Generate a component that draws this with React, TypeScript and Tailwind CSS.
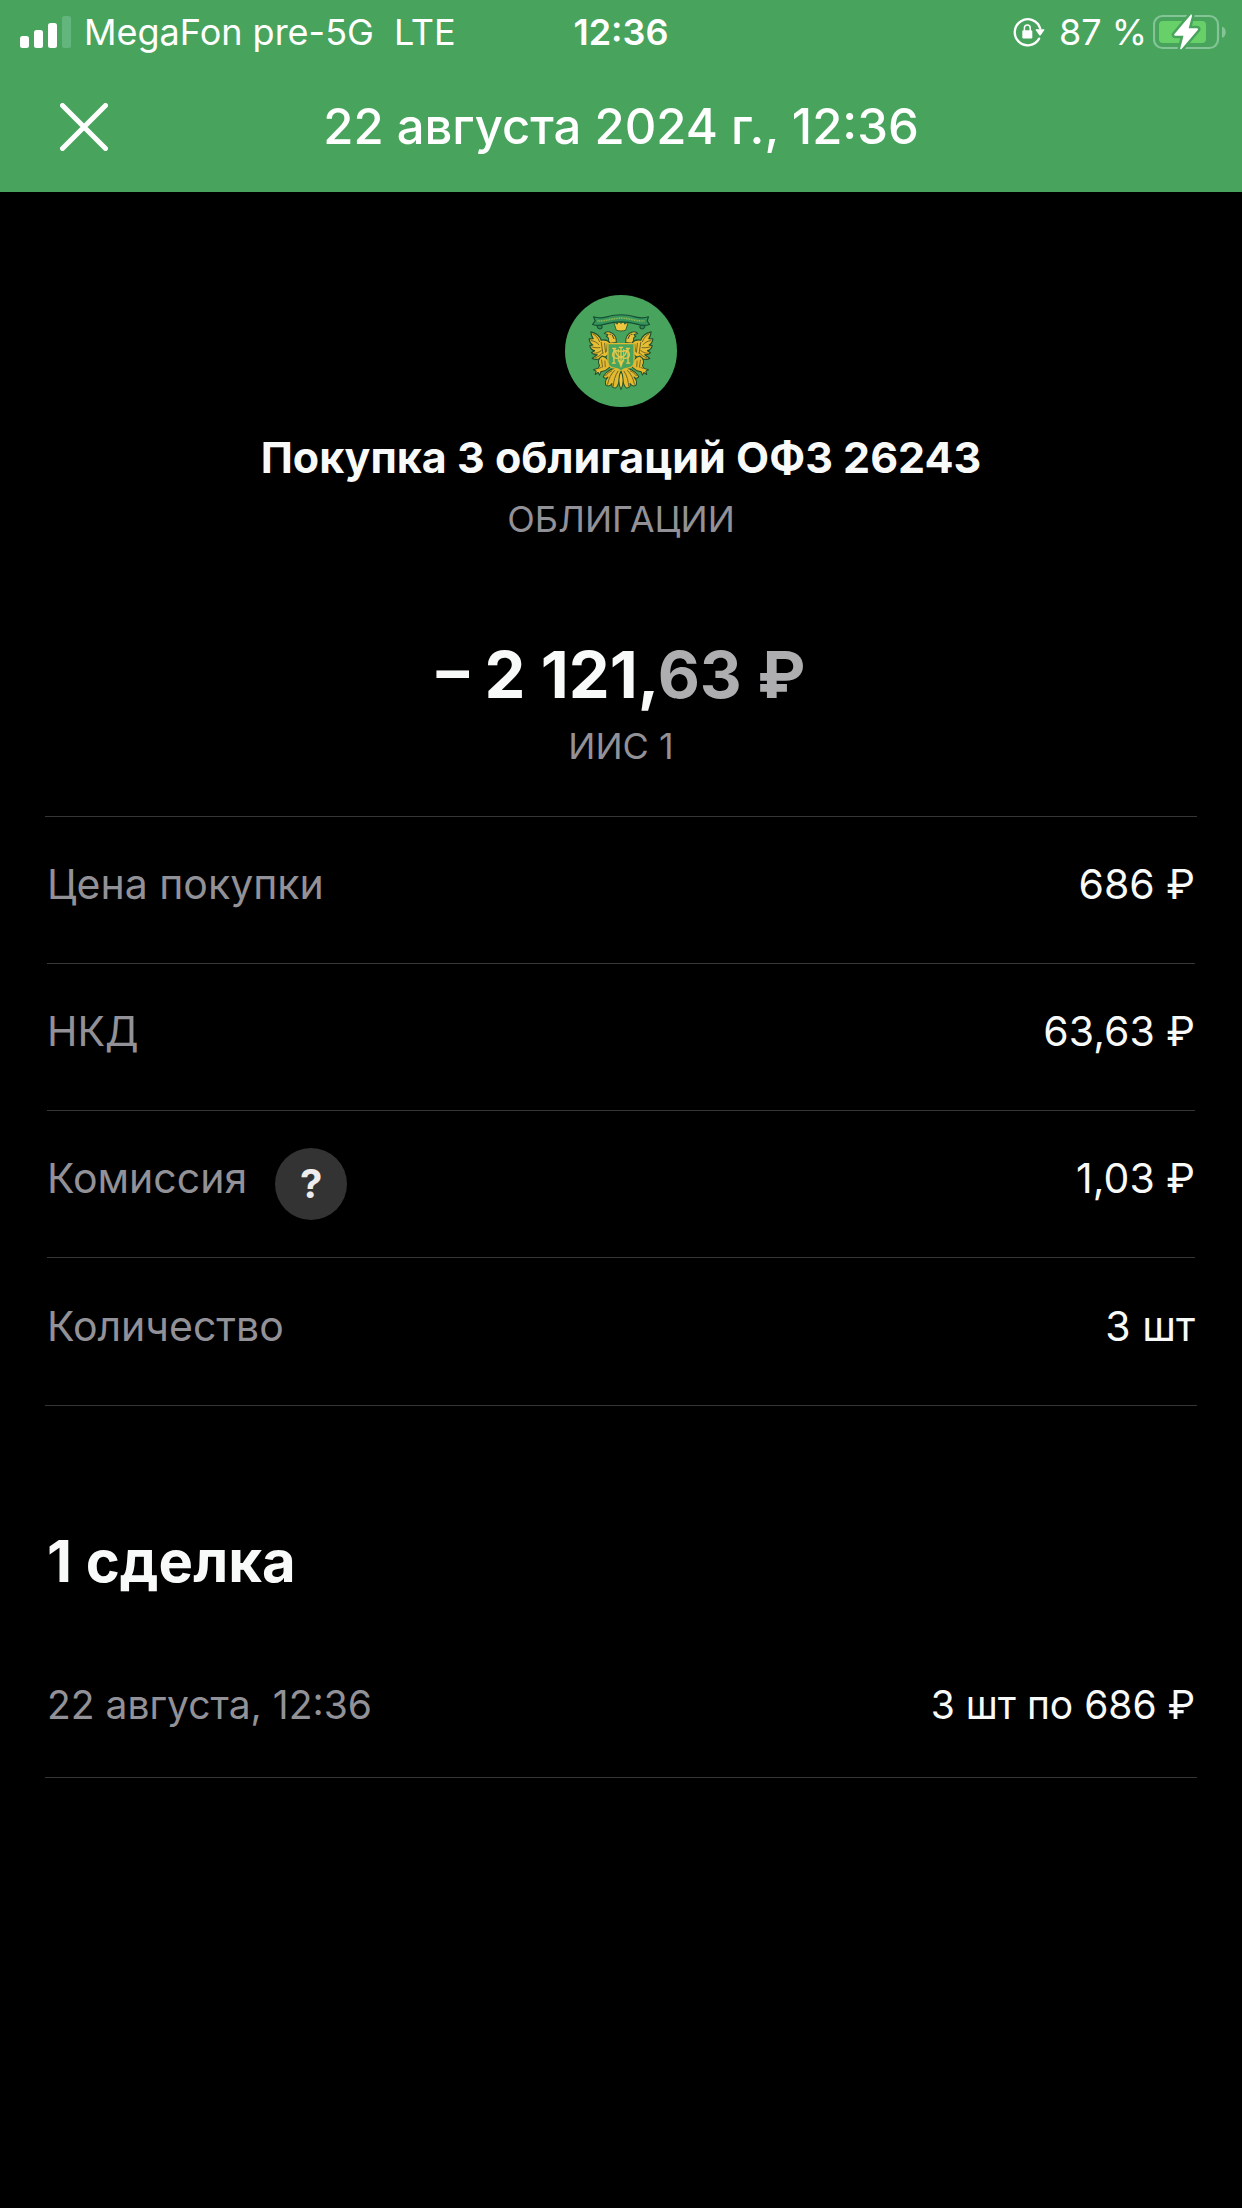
import React from 'react';

const DETAILS = [
  { label: 'Цена покупки', value: '686 ₽', hint: false },
  { label: 'НКД', value: '63,63 ₽', hint: false },
  { label: 'Комиссия', value: '1,03 ₽', hint: true },
  { label: 'Количество', value: '3 шт', hint: false },
];

const TRADES = [{ date: '22 августа, 12:36', value: '3 шт по 686 ₽' }];

function SignalIcon() {
  return (
    <svg className="w-[52px] h-8" viewBox="0 0 52 32" fill="white" aria-hidden="true">
      <rect x="0" y="20" width="9" height="12" rx="2.5" />
      <rect x="14" y="14" width="9" height="18" rx="2.5" />
      <rect x="28" y="7" width="9" height="25" rx="2.5" />
      <rect x="42" y="0" width="9" height="32" rx="2.5" fill="#62b67d" />
    </svg>
  );
}

function RotationLockIcon() {
  return (
    <svg className="w-8 h-[30px]" viewBox="0 0 32 30" fill="none" aria-hidden="true">
      <path d="M26.1 21.6A13 13 0 1 1 27.2 11.5" stroke="white" strokeWidth="2.3" strokeLinecap="round" />
      <path d="M23.4 12.2h7.2c.8 0 1 .6.6 1.1l-3.5 4.9c-.4.5-1 .5-1.4 0l-3.5-4.9c-.4-.5-.2-1.1.6-1.1z" fill="white" />
      <rect x="9.3" y="13.3" width="10" height="8.3" rx="1.3" fill="white" />
      <path d="M11.4 14v-3a2.9 2.9 0 0 1 5.8 0v3" stroke="white" strokeWidth="1.5" />
    </svg>
  );
}

function BatteryIcon() {
  return (
    <svg className="w-[73px] h-9" viewBox="0 0 73 36" fill="none" aria-hidden="true">
      <rect x="1" y="2" width="64" height="32" rx="8.5" stroke="#84c497" strokeWidth="2.2" />
      <path d="M69 12.5c5 2 5 9.5 0 11.5z" fill="#84c497" />
      <rect x="6" y="7" width="47" height="22" rx="4" fill="#68d068" />
      <path
        d="M37.5 1 21.5 20c-.7.9-.3 1.7.7 1.7h8.3L27.3 34c-.3 1.5.6 1.7 1.5.7L44.7 16c.7-.9.3-1.8-.7-1.8h-8.3L39 2c.3-1.3-.7-1.9-1.5-1z"
        fill="white"
        stroke="#48a45d"
        strokeWidth="5"
        strokeLinejoin="round"
        paintOrder="stroke"
      />
    </svg>
  );
}

function Wing() {
  return (
    <g>
      <path
        d="M182 190c-8-9-18-12-28-9-4-13-14-21-31-25 1 9 3 15 7 20l-12 1c1 9 5 15 11 18l-9 2c2 9 7 14 14 15l-9 6c5 6 10 7 17 6l-15 11c8 4 15 4 23 1 10 0 18-5 25-12z"
        fill="#e6bd33"
        stroke="#23502f"
        strokeWidth="3.5"
        strokeLinejoin="round"
      />
      <path
        d="M129 162c10 5 16 12 20 23M124 182c9 1 17 5 23 12M126 201c9 2 17 3 24 2M132 220c8 0 15-3 22-8M137 233c8-3 15-7 21-14M154 187l5 33M164 190l3 27M172 192l-2 22"
        stroke="#5b571f"
        strokeWidth="2.5"
        strokeLinecap="round"
      />
      {/* head */}
      <path
        d="M199 188c1-16-6-26-17-31-8-3-15-2-19 4l11 3-5 6c6 1 8 6 6 12l6 8z"
        fill="#e8c03b"
        stroke="#23502f"
        strokeWidth="3"
        strokeLinejoin="round"
      />
      <path d="M180 163h3M187 166l5 10" stroke="#564b1c" strokeWidth="3" strokeLinecap="round" />
      {/* leg and claw */}
      <path
        d="M157 228c-12 7-14 19-8 28l-4 8-14 5 8 4-3 10 9-6 4 8 4-10 14-4 12-9c0-18-8-31-22-34z"
        fill="#e3b92f"
        stroke="#23502f"
        strokeWidth="3"
        strokeLinejoin="round"
      />
      <path d="M155 240l3 21M165 243l1 17M147 265l7-3" stroke="#675b22" strokeWidth="2.5" strokeLinecap="round" />
      {/* tail feathers */}
      <path
        d="M212 262c-24 0-41 9-52 27 3 6 9 7 14 2-8 9-9 18-5 25 7 3 13 0 17-6-2 9 2 14 11 13 9-6 14-32 15-61z"
        fill="#e3b92f"
        stroke="#23502f"
        strokeWidth="3"
        strokeLinejoin="round"
      />
      <path
        d="M194 271c-11 10-17 23-21 41M204 273c-9 14-13 29-14 45M185 272c-7 3-13 9-18 15"
        stroke="#5b571f"
        strokeWidth="2.5"
        strokeLinecap="round"
      />
    </g>
  );
}

function BondLogo() {
  return (
    <svg className="w-28 h-28" viewBox="46 46 334 334" fill="none" role="img" aria-label="ОФЗ 26243">
      <circle cx="213" cy="213" r="167" fill="#48a45d" />
      <path d="M143 132c-3 8 0 15 7 15s9-7 4-11M283 132c3 8 0 15-7 15s-9-7-4-11" fill="#2e8a4f" stroke="#1d5236" strokeWidth="3.5" />
      <Wing />
      <g transform="matrix(-1 0 0 1 426 0)">
        <Wing />
      </g>
      {/* crown */}
      <path
        d="M199 151l-8-25 11 7 3-9 8 7 8-7 3 9 11-7-8 25c-8 3-20 3-28 0z"
        fill="#efc73f"
        stroke="#23502f"
        strokeWidth="2.5"
        strokeLinejoin="round"
      />
      {/* ribbon */}
      <path
        d="M131 111c12 4 25 4 37 1 19-5 31-7 45-7s26 2 45 7c12 3 25 3 37-1l-4 12 7 11c-12 4-25 3-37-1-19-5-31-7-48-7s-29 2-48 7c-12 4-25 5-37 1l8-11z"
        fill="#35945a"
        stroke="#174f35"
        strokeWidth="3.5"
        strokeLinejoin="round"
      />
      <path d="M143 123c22 3 42-8 70-8s48 11 70 8" stroke="#9bbb4c" strokeWidth="5" strokeDasharray="3 2" />
      {/* shield */}
      <path
        d="M174 191h78v56c0 10-8 15-19 17-9 1-15 4-20 9-5-5-11-8-20-9-11-2-19-7-19-17z"
        fill="#48a45d"
        stroke="#e3b92f"
        strokeWidth="3.5"
      />
      <g stroke="#e9c94a" strokeWidth="4" strokeLinecap="round">
        <path d="M188 205h9M192 206v42M187 249h9M229 205h9M234 206v42M230 249h9" />
        <path d="M194 207c4 13 7 23 19 23s15-10 19-23" />
        <path d="M213 202v54M208 202h10M207 240l6 18 6-18" />
        <path d="M211 214c-15-5-23 1-23 10s9 14 23 9M215 214c15-5 23 1 23 10s-9 14-23 9" />
        <path d="M205 208v36M221 208v36" strokeWidth="2.5" />
      </g>
      <path d="M213 274c-8 12-9 38 0 54 9-16 8-42 0-54z" fill="#efc73f" stroke="#23502f" strokeWidth="3" />
    </svg>
  );
}

export default function App() {
  return (
    <div className="min-h-screen bg-black text-white font-['Inter',sans-serif]">
      <header className="bg-[#48a45d]">
        <div className="grid grid-cols-[1fr_auto_1fr] items-center h-16 px-4 text-4xl">
          <div className="flex items-center gap-3 pl-1">
            <SignalIcon />
            <span>MegaFon pre-5G</span>
            <span className="pl-2">LTE</span>
          </div>
          <time className="font-semibold">12:36</time>
          <div className="flex items-center justify-end gap-1.5">
            <RotationLockIcon />
            <span className="pl-2">87 %</span>
            <BatteryIcon />
          </div>
        </div>
        <div className="grid grid-cols-[1fr_auto_1fr] items-center h-32 px-[60px] pb-0.5">
          <button type="button" aria-label="Закрыть" className="w-12 h-12">
            <svg className="w-12 h-12" viewBox="0 0 48 48" fill="none" stroke="white" strokeWidth="5" strokeLinecap="round">
              <path d="M2.5 2.5l43 43M45.5 2.5l-43 43" />
            </svg>
          </button>
          <h1 className="text-[49px] leading-[60px] font-medium">22 августа 2024 г., 12:36</h1>
        </div>
      </header>

      <main className="px-[45px]">
        <section className="flex flex-col items-center pt-[103px] pb-[50px] text-center">
          <BondLogo />
          <h2 className="mt-6 text-[43px] leading-[52px] font-bold text-[#f8f9f9]">Покупка 3 облигаций ОФЗ 26243</h2>
          <p className="mt-4 text-4xl text-[#919197]">ОБЛИГАЦИИ</p>
          <p className="mt-24 text-[65px] leading-[80px] font-bold text-[#f8f9f9]">
            – 2 121,<span className="text-[#aeaeb0]">63 ₽</span>
          </p>
          <p className="mt-[11px] text-4xl text-[#919197]">ИИС 1</p>
        </section>

        <dl className="border-y border-[#363636] px-0.5 divide-y divide-[#363636] text-[41px] leading-[52px]">
          {DETAILS.map((row) => (
            <div key={row.label} className="flex items-center justify-between h-[147px]">
              <dt className="flex items-center gap-7 text-[#919197]">
                <span className="pb-3">{row.label}</span>
                {row.hint && (
                  <button
                    type="button"
                    aria-label="Подробнее о комиссии"
                    className="w-[72px] h-[72px] rounded-full bg-[#333333] text-[#ededed] text-[40px] font-bold"
                  >
                    ?
                  </button>
                )}
              </dt>
              <dd className="pb-3 text-[#f8f9f9]">{row.value}</dd>
            </div>
          ))}
        </dl>

        <section className="pt-[119px]">
          <h2 className="px-0.5 text-[58px] leading-[72px] font-bold text-[#f8f9f9]">1 сделка</h2>
          <ul className="pt-[38px]">
            {TRADES.map((trade) => (
              <li
                key={trade.date}
                className="flex items-center justify-between h-[143px] px-0.5 pb-0.5 border-b border-[#363636] text-[39px] leading-[48px]"
              >
                <span className="text-[#919197]">{trade.date}</span>
                <span className="text-[#f8f9f9]">{trade.value}</span>
              </li>
            ))}
          </ul>
        </section>
      </main>
    </div>
  );
}
